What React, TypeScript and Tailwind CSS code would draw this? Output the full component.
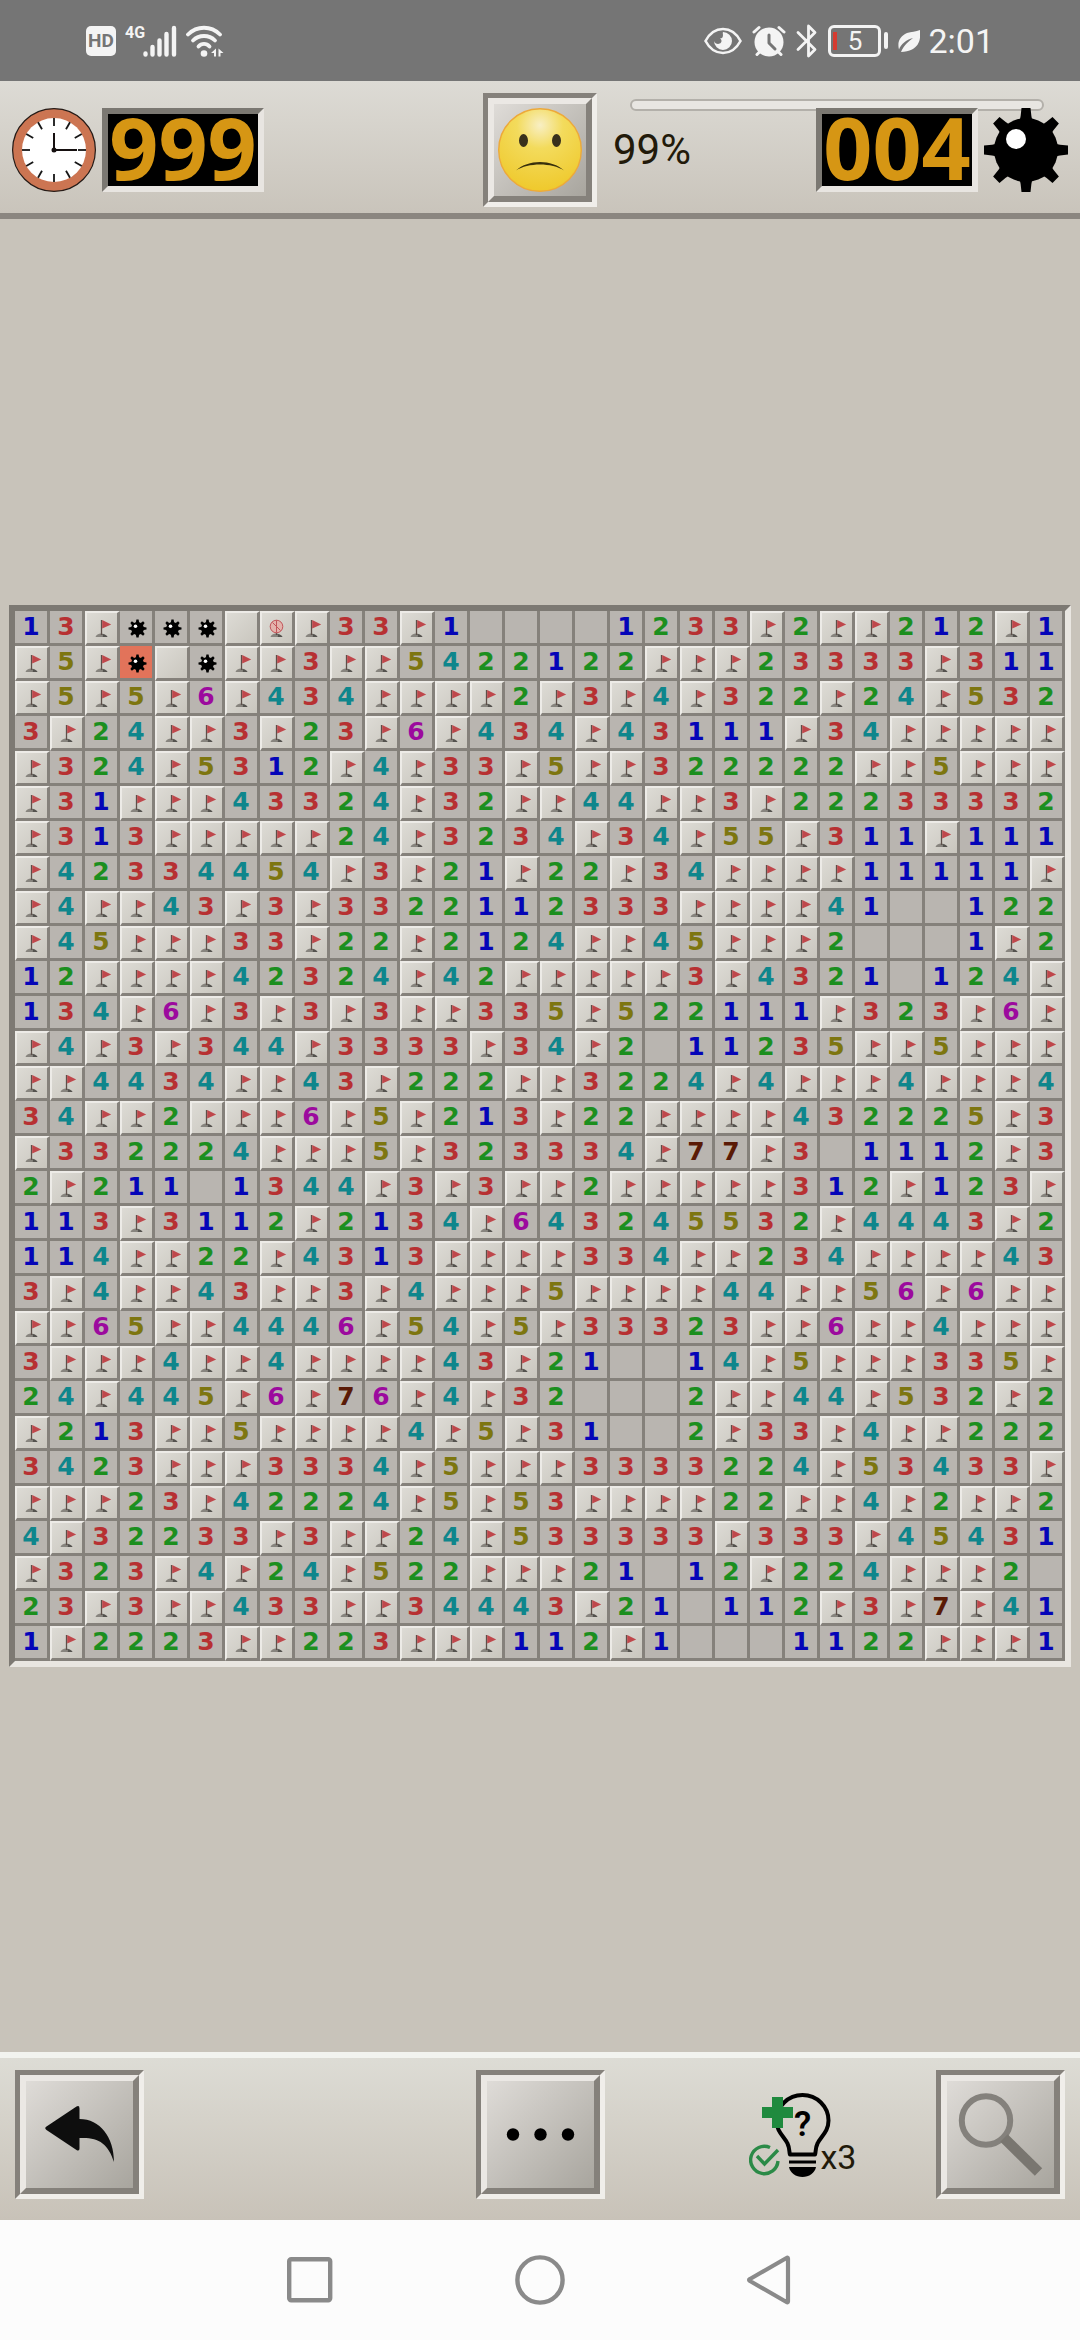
import type { ReactNode } from "react";
import clsx from "clsx";

// F = flag, W = wrong flag, M = mine, X = exploded mine, # = closed, . = open and empty
const BOARD = [
	"13FMMM#WF33F1....1233F2FF212F1",
	"F5FX#MFF3FF5422122FFF23333F311",
	"F5F5F6F434FFFF2F3F4F322F24F532",
	"3F24FF3F23F6F434F43111F34FFFFF",
	"F324F5312F4F33F5FF322222FF5FFF",
	"F31FFF43324F32FF44FF3F22233332",
	"F313FFFFF24F3234F34F55F311F111",
	"F42334454F3F21F22F34FFFF11111F",
	"F4FF43F3F3322112333FFFF41..122",
	"F45FFF33F22F2124FF45FFF2...1F2",
	"12FFFF42324F42FFFFF3F4321.124F",
	"134F6F3F3F3FF335F522111F323F6F",
	"F4F3F344F3333F34F2.11235FF5FFF",
	"FF4434FF43F222FF3224F4FFF4FFF4",
	"34FF2FFF6F5F213F22FFFF432225F3",
	"F332224FFF5F323334F77F3.1112F3",
	"2F211.1344F3F3FF2FFFFF312F123F",
	"113F3112F2134F643245532F4443F2",
	"114FF22F4313FFFF334FF234FFFF43",
	"3F4FF43FF3F4FFF5FFFF44FF56F6FF",
	"FF65FF4446F54F5F33323FF6FF4FFF",
	"3FFF4FF4FFFF43F21..14F5FFF335F",
	"24F445F6F76F4F32...2FF44F532F2",
	"F213FF5FFFF4F5F31..2F33F4FF222",
	"3423FFF3334F5FFF3333224F53433F",
	"FFF23F42224F5F53FFFF22FF4F2FF2",
	"4F32233F3FF24F533333F333F45431",
	"F323F4F24F522FFF21.12F224FFF2.",
	"23F3FF433FF34443F21.112F3F7F41",
	"1F2223FF223FFF112F1...1122FFF1",
];

const NUMBER_COLORS: Record<string, string> = {
	"1": "text-[#0505b8]",
	"2": "text-[#1c8f1f]",
	"3": "text-[#b73032]",
	"4": "text-[#0f868c]",
	"5": "text-[#7d7610]",
	"6": "text-[#9c0a9e]",
	"7": "text-[#5a1a06]",
};

const SPOKES = [0, 45, 90, 135, 180, 225, 270, 315];
const HOURS = [0, 30, 60, 90, 120, 150, 180, 210, 240, 270, 300, 330];

function FlagIcon({ wrong = false }: { wrong?: boolean }) {
	return (
		<svg viewBox="2 2 30 30" className="w-full h-full" aria-hidden="true">
			<path d="M10.5 26c.5-2 3-3.500 5.500-3.500s5.500 1.500 6.500 3.500z" fill="#87847e" />
			<path d="M17 23c2.500 0 5 1.500 5.500 3h-5c1-1 .5-2-.5-3z" fill="#54524e" />
			<path d="M16.500 9v15" stroke="#5d4f49" strokeWidth="1.300" />
			{wrong ? (
				<g fill="#e3b3ac" stroke="#c2555a" strokeWidth="1">
					<circle cx="16.500" cy="15.500" r="6.300" />
					<path d="M12.500 11.500l8 8M16.500 9.500v12" />
				</g>
			) : (
				<path d="M17.200 9l9 4.500-9 4z" fill="#bf474b" />
			)}
		</svg>
	);
}

function MineIcon() {
	return (
		<svg viewBox="0 0 32 32" className="w-full h-full" aria-hidden="true">
			<circle cx="17.500" cy="17.500" r="6.400" />
			{SPOKES.map((angle) => (
				<path
					key={angle}
					d="M15.700 12.500l.7-4h2.200l.7 4z"
					transform={`rotate(${angle} 17.5 17.5)`}
				/>
			))}
			<circle cx="15.500" cy="15.300" r="1.800" fill="#fff" />
		</svg>
	);
}

function Cell({ value }: { value: string }) {
	const closed = value === "F" || value === "W" || value === "#";

	let content: ReactNode = null;
	if (value === "F") content = <FlagIcon />;
	else if (value === "W") content = <FlagIcon wrong />;
	else if (value === "M" || value === "X") content = <MineIcon />;
	else if (NUMBER_COLORS[value]) content = value;

	return (
		<button
			className={clsx(
				"flex items-center justify-center aspect-square min-w-0 border-r-3 border-b-3 border-r-[#85817b] border-b-[#85817b] font-bold text-[25px] leading-none",
				closed
					? "border-t-2 border-l-2 border-t-[#edebe7] border-l-[#edebe7] bg-linear-to-br from-[#dddbd5] to-[#c9c6be]"
					: value === "X"
						? "bg-[#e2735a]"
						: "bg-[#b9b5b0]",
				NUMBER_COLORS[value]
			)}
		>
			{content}
		</button>
	);
}

// Sunken frame around a raised face
function BevelButton({ label, children }: { label: string; children: ReactNode }) {
	return (
		<button
			aria-label={label}
			className="border-5 border-t-[#85817b] border-l-[#85817b] border-r-[#f0eeea] border-b-[#f0eeea]"
		>
			<span className="flex items-center justify-center border-6 border-t-[#ebe8e4] border-l-[#ebe8e4] border-r-[#85817b] border-b-[#85817b] bg-linear-to-br from-[#dfdcd8] to-[#a8a59e]">
				{children}
			</span>
		</button>
	);
}

function Counter({ value }: { value: string }) {
	return (
		<div className="flex items-center justify-center w-[162px] h-[84px] pb-1.5 border-6 border-t-[#7b7872] border-l-[#7b7872] border-r-[#e8e5e1] border-b-[#e8e5e1] bg-black text-[#d69614] font-['Noto_Sans',sans-serif] font-bold text-[86px] leading-none">
			{value}
		</div>
	);
}

function ClockIcon() {
	return (
		<svg viewBox="0 0 84 84" className="w-[84px] h-[84px]" aria-hidden="true">
			<circle cx="42" cy="42" r="41.400" fill="#cc7552" stroke="#241a16" strokeWidth="1.200" />
			<circle cx="42" cy="42" r="32" fill="#fff" />
			{HOURS.map((angle) => (
				<path
					key={angle}
					d="M42 10v8"
					stroke="#161616"
					strokeWidth="1.800"
					transform={`rotate(${angle} 42 42)`}
				/>
			))}
			<path d="M42 25v17h23" fill="none" stroke="#161010" strokeWidth="2" />
			<circle cx="42" cy="42" r="2.500" fill="#161010" />
		</svg>
	);
}

function SadFace() {
	return (
		<svg viewBox="0 0 92 92" className="w-[92px] h-[92px]" aria-hidden="true">
			<defs>
				<radialGradient id="face" cx="0.5" cy="0.2" r="0.8">
					<stop offset="0" stopColor="#f8efc4" />
					<stop offset="0.35" stopColor="#f3db5c" />
					<stop offset="1" stopColor="#efc92c" />
				</radialGradient>
			</defs>
			<circle cx="46" cy="46" r="41.300" fill="url(#face)" stroke="#eda93a" strokeWidth="1.400" />
			<ellipse cx="29.500" cy="36.500" rx="4.500" ry="6.500" fill="#38301c" />
			<ellipse cx="62.500" cy="36.500" rx="4.500" ry="6.500" fill="#38301c" />
			<path d="M22 66.500C34 55 58 55 70 66.500 58 58.500 34 58.500 22 66.500z" fill="#38300c" />
		</svg>
	);
}

function MineBadge() {
	return (
		<svg viewBox="0 0 84 84" className="w-[84px] h-[84px]" aria-hidden="true">
			<circle cx="42" cy="42" r="32" />
			{SPOKES.map((angle) => (
				<path
					key={angle}
					d="M35 16q2-8 2.500-16h9q.5 8 2.500 16z"
					transform={`rotate(${angle} 42 42)`}
				/>
			))}
			<circle cx="32" cy="31" r="10" fill="#fff" />
		</svg>
	);
}

function StatusBar() {
	return (
		<div className="flex items-center justify-between h-[81px] pl-[86px] pr-[86px] bg-[#757575] text-[#f4f4f4]">
			<div className="flex items-center gap-[9px]">
				<span className="flex items-center justify-center w-[30px] h-[30px] rounded-[5px] bg-[#f4f4f4] text-[#757575] font-bold text-[19px] leading-none">
					HD
				</span>
				<div className="flex items-start h-8">
					<span className="w-[18px] text-center font-bold text-[16px] leading-none">4G</span>
					<svg viewBox="0 0 34 32" className="w-[34px] h-8" aria-hidden="true">
						<path
							d="M2.500 28.500v1M9.500 22v7.500M16.500 15.500v14M23.500 9v20.500M31 3v26.500"
							stroke="currentColor"
							strokeWidth="4.400"
							strokeLinecap="round"
						/>
					</svg>
				</div>
				<svg viewBox="0 0 38 32" className="w-[38px] h-8" aria-hidden="true">
					<g fill="none" stroke="currentColor" strokeWidth="3.800" strokeLinecap="round">
						<path d="M2 9.500C11 .5 25 .5 34 9.500" />
						<path d="M7 15.500c6-6 16-6 22 0" />
						<path d="M12.500 21.500c3-3.500 8-3.500 11 0" />
					</g>
					<circle cx="18" cy="28.500" r="3.300" fill="currentColor" />
					<path d="M25 28l5-4.500v8h-2v-3.500zM32.500 23.500l5 4.500h-3v3.500h-2z" fill="currentColor" />
				</svg>
			</div>
			<div className="flex items-center gap-[10px]">
				<svg viewBox="0 0 38 28" className="w-[38px] h-7" aria-hidden="true">
					<path
						d="M1.500 14C10-2 28-2 36.500 14 28 30 10 30 1.500 14z"
						fill="none"
						stroke="currentColor"
						strokeWidth="2.600"
					/>
					<path
						d="M19 5a9 9 0 1 1-9 9c1 3 5 4 7 1.500 1-1.500.5-3-1-4 2 0 3-1 3-3.500 0-1-.5-2 0-3z"
						fill="currentColor"
					/>
				</svg>
				<svg viewBox="0 0 34 32" className="w-[34px] h-8" aria-hidden="true">
					<circle cx="17" cy="17" r="14.500" fill="currentColor" />
					<path
						d="M2 7l5-4.500M32 7l-5-4.500M5 29.500l4-4M29 29.500l-4-4"
						stroke="currentColor"
						strokeWidth="3"
						strokeLinecap="round"
					/>
					<path
						d="M17 10v8l6 6"
						fill="none"
						stroke="#757575"
						strokeWidth="3"
						strokeLinecap="round"
						strokeLinejoin="round"
					/>
				</svg>
				<svg viewBox="0 0 22 34" className="w-[22px] h-[34px]" aria-hidden="true">
					<path
						d="M2 8.500l17 17-6.500 6.500V2L19 8.500l-17 17"
						fill="none"
						stroke="currentColor"
						strokeWidth="2.800"
						strokeLinecap="round"
						strokeLinejoin="round"
					/>
				</svg>
				<div className="flex items-center gap-[3px]">
					<span className="relative flex items-center justify-center w-[53px] h-8 border-3 rounded-[6px] text-[26px] leading-none">
						<span className="absolute left-0.5 top-1 bottom-1 w-1 bg-[#d63b30]" />5
					</span>
					<span className="w-1 h-[17px] rounded-full bg-current" />
				</div>
				<div className="flex items-center gap-2">
					<svg viewBox="0 0 22 22" className="w-[22px] h-[22px]" aria-hidden="true">
						<path
							d="M22 0c1 9-1 16-8 19.500-3 1.500-7 2.500-11 2.500 3-7 8-11 12-14C8 10 3 14 1 19.500-1 12 2 6 9 3c4-1.500 9-1 13-3z"
							fill="currentColor"
						/>
					</svg>
					<span className="text-[34px] leading-none">2:01</span>
				</div>
			</div>
		</div>
	);
}

function Header() {
	return (
		<header className="grid grid-cols-[1fr_auto_1fr] items-center h-[138px] px-3 pt-1.5 border-b-6 border-[#8b8680] bg-linear-to-b from-[#dddbd5] to-[#c9c4bb]">
			<div className="flex items-center gap-1.5">
				<ClockIcon />
				<Counter value="999" />
			</div>
			<BevelButton label="New game">
				<SadFace />
			</BevelButton>
			<div className="relative flex items-center justify-between self-stretch pl-4">
				<div className="absolute top-3 left-[33px] right-6 h-3 border-2 border-[#b3b0aa] rounded-full bg-[#e8e6e2]" />
				<span className="text-[42px] leading-none text-[#221a0a]">99%</span>
				<div className="relative flex items-center gap-1.5">
					<Counter value="004" />
					<MineBadge />
				</div>
			</div>
		</header>
	);
}

function HintButton() {
	return (
		<button aria-label="Hints left: 3" className="flex items-end text-[#221a0a]">
			<svg viewBox="0 0 82 84" className="w-[82px] h-[84px]" aria-hidden="true">
				<path
					d="M41 61.500c-1-2 0-6-2.500-11C35 43 27.500 39 27.500 27.500a26 25.500 0 0 1 52 0C79.500 39 72 43 68.500 50.500 66 55.500 67 59.500 66 61.500z"
					fill="none"
					stroke="#000"
					strokeWidth="4"
					strokeLinejoin="round"
				/>
				<path d="M40 67.500h27v3H40zM40 74h27c-1 6-7 10-13.500 10S41 80 40 74z" fill="#000" />
				<text x="53.500" y="43" textAnchor="middle" fontSize="35" fontWeight="600">
					?
				</text>
				<path d="M23 4h11v10h10v11H34v10H23V25H13V14h10z" fill="#1f8a3e" />
				<g fill="none" stroke="#2b8a47" strokeWidth="3.400">
					<path d="M21 54.500A13.700 13.700 0 1 0 29 68" />
					<path d="M8 63l7.500 8L29 57" />
				</g>
			</svg>
			<span className="-ml-2.5 text-[34px] leading-10">x3</span>
		</button>
	);
}

function Toolbar() {
	return (
		<footer className="grid grid-cols-[1fr_auto_1fr] items-start h-[168px] px-[15px] pt-3 border-t-6 border-[#f2f3ef] bg-linear-to-b from-[#dddcd5] to-[#c8c2b8]">
			<div className="flex">
				<BevelButton label="Back">
					<svg viewBox="0 0 107 107" className="w-[107px] h-[107px]" aria-hidden="true">
						<path
							d="M20.500 45.500L50.500 25.500q3-1.500 3 2V38C74 38 88 56 88 81 82 62 72 56 53.500 57v10.500q0 3-3 1.500L20.500 49q-2.500-1.800 0-3.500z"
							fill="#0e0e0e"
						/>
					</svg>
				</BevelButton>
			</div>
			<BevelButton label="More">
				<svg viewBox="0 0 107 107" className="w-[107px] h-[107px]" aria-hidden="true">
					<circle cx="26" cy="53.500" r="6.200" />
					<circle cx="53.500" cy="53.500" r="6.200" />
					<circle cx="81" cy="53.500" r="6.200" />
				</svg>
			</BevelButton>
			<div className="flex items-center justify-between pl-36">
				<HintButton />
				<BevelButton label="Zoom">
					<svg viewBox="0 0 107 107" className="w-[107px] h-[107px]" aria-hidden="true">
						<circle cx="39" cy="39.500" r="24.200" fill="none" stroke="#84817c" strokeWidth="6" />
						<path d="M57 57l34.500 34" stroke="#797670" strokeWidth="10.500" />
					</svg>
				</BevelButton>
			</div>
		</footer>
	);
}

function NavigationBar() {
	return (
		<nav className="flex items-center justify-center gap-[180px] h-[120px] bg-[#fcfcfc] text-[#8a8a8a]">
			<button aria-label="Recent apps">
				<svg viewBox="0 0 50 50" className="w-[50px] h-[50px]" aria-hidden="true">
					<rect
						x="4.200"
						y="4.200"
						width="41"
						height="41"
						rx="2"
						fill="none"
						stroke="currentColor"
						strokeWidth="4.400"
					/>
				</svg>
			</button>
			<button aria-label="Home">
				<svg viewBox="0 0 50 50" className="w-[50px] h-[50px]" aria-hidden="true">
					<circle cx="25" cy="25" r="22.600" fill="none" stroke="currentColor" strokeWidth="4.400" />
				</svg>
			</button>
			<button aria-label="Go back">
				<svg viewBox="0 0 50 50" className="w-[50px] h-[50px]" aria-hidden="true">
					<path
						d="M43 3.500v43Q43 48 41.500 47L5 26Q3 25 5 24L41.500 3Q43 2 43 3.500z"
						fill="none"
						stroke="currentColor"
						strokeWidth="4.200"
						strokeLinejoin="round"
					/>
				</svg>
			</button>
		</nav>
	);
}

export default function App() {
	return (
		<div className="flex flex-col min-h-screen bg-[#c8c3ba] font-['Roboto',sans-serif]">
			<StatusBar />
			<Header />
			<main className="flex flex-1 flex-col justify-center px-[9px]">
				<div className="grid grid-cols-[repeat(30,minmax(0,1fr))] border-6 border-t-[#7d7973] border-l-[#7d7973] border-r-[#e9e6e1] border-b-[#e9e6e1] font-['DejaVu_Sans',sans-serif]">
					{BOARD.flatMap((row, y) =>
						row.split("").map((value, x) => <Cell key={`${x}-${y}`} value={value} />)
					)}
				</div>
			</main>
			<Toolbar />
			<NavigationBar />
		</div>
	);
}
